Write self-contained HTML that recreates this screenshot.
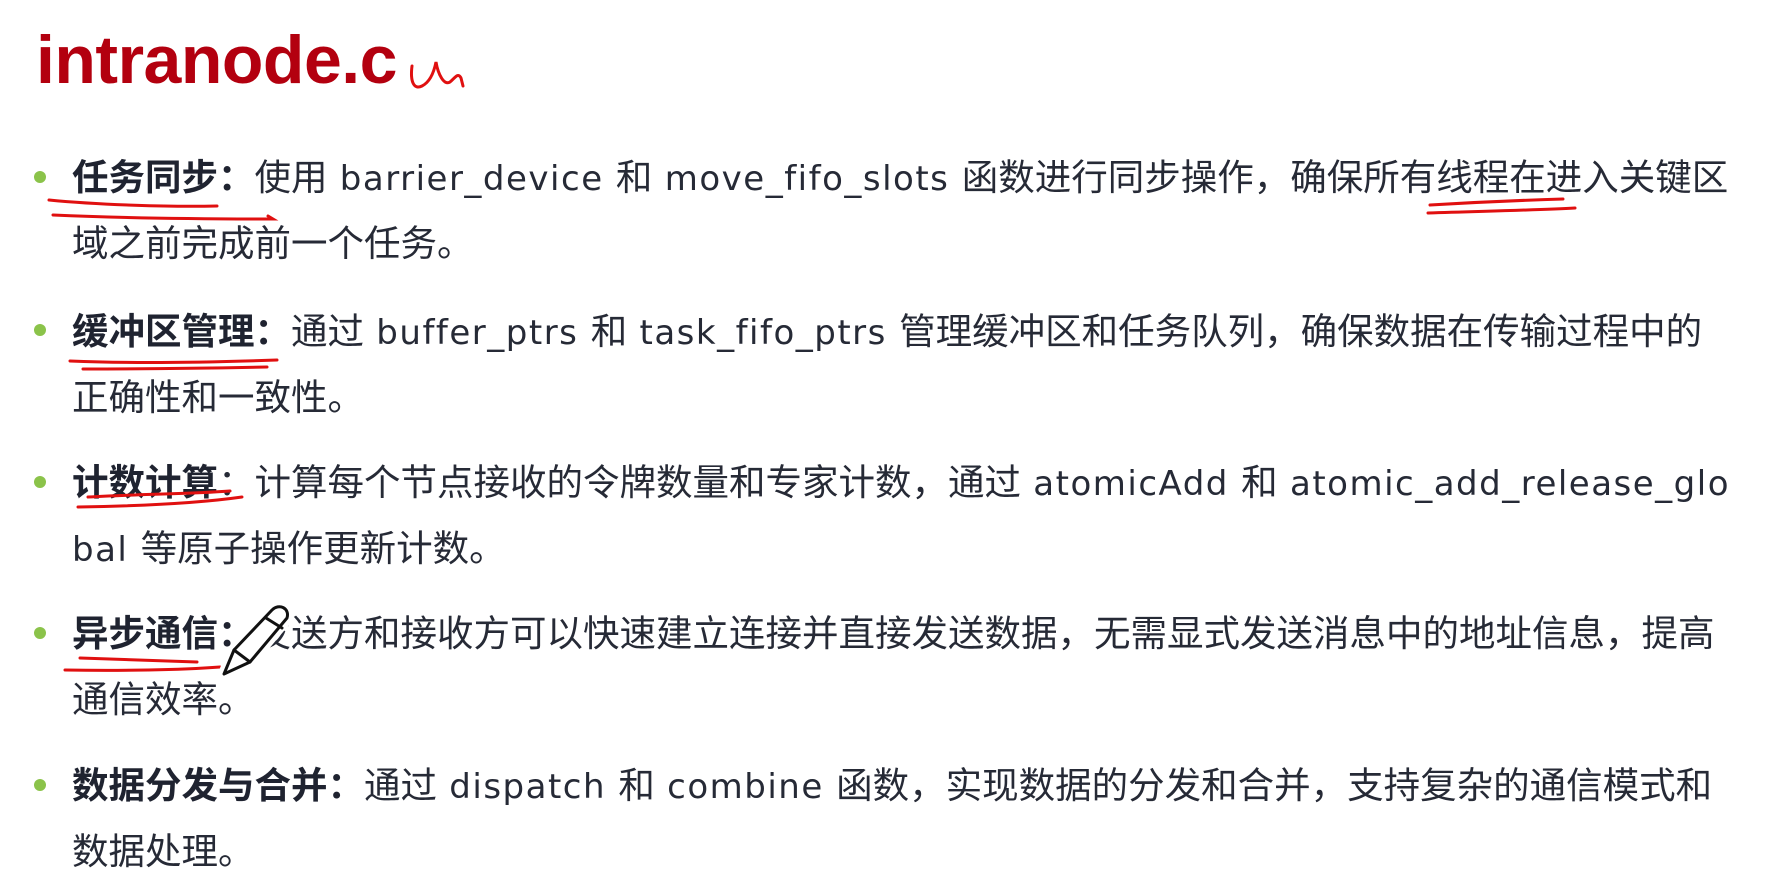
<!DOCTYPE html>
<html><head><meta charset="utf-8">
<style>
html,body{margin:0;padding:0;background:#fff;}
body{width:1770px;height:882px;position:relative;overflow:hidden;font-family:"Liberation Sans","Noto Sans CJK SC",sans-serif;color:#262a36;}
.t{position:absolute;left:36px;top:20px;font-size:68px;font-weight:bold;color:#b3000f;line-height:80px;letter-spacing:-0.5px;}
.l{position:absolute;left:72px;font-size:36.5px;line-height:40px;white-space:nowrap;}
.l b{font-weight:bold;color:#1f2330;}
.e{font-family:"DejaVu Sans",sans-serif;letter-spacing:1.5px;font-size:34px;}
.d{position:absolute;left:34px;width:12px;height:12px;border-radius:50%;background:#8bc34a;}
svg{position:absolute;left:0;top:0;}
</style></head><body>
<div class="t">intranode.c</div>

<div class="d" style="top:171px"></div>
<div class="l" style="top:158px"><b>任务同步：</b>使用<span class="e"> barrier_device </span>和<span class="e"> move_fifo_slots </span>函数进行同步操作，确保所有线程在进入关键区</div>
<div class="l" style="top:224px">域之前完成前一个任务。</div>

<div class="d" style="top:324px"></div>
<div class="l" style="top:312px"><b>缓冲区管理：</b>通过<span class="e"> buffer_ptrs </span>和<span class="e"> task_fifo_ptrs </span>管理缓冲区和任务队列，确保数据在传输过程中的</div>
<div class="l" style="top:378px">正确性和一致性。</div>

<div class="d" style="top:476px"></div>
<div class="l" style="top:463px"><b>计数计算</b>：计算每个节点接收的令牌数量和专家计数，通过<span class="e"> atomicAdd </span>和<span class="e"> atomic_add_release_glo</span></div>
<div class="l" style="top:529px"><span class="e">bal </span>等原子操作更新计数。</div>

<div class="d" style="top:627px"></div>
<div class="l" style="top:614px"><b>异步通信：</b>发送方和接收方可以快速建立连接并直接发送数据，无需显式发送消息中的地址信息，提高</div>
<div class="l" style="top:680px">通信效率。</div>

<div class="d" style="top:779px"></div>
<div class="l" style="top:766px"><b>数据分发与合并：</b>通过<span class="e"> dispatch </span>和<span class="e"> combine </span>函数，实现数据的分发和合并，支持复杂的通信模式和</div>
<div class="l" style="top:832px">数据处理。</div>

<svg width="1770" height="882" fill="none" stroke="#e01010" stroke-linecap="round" stroke-width="3">
<path d="M412 66 C410 82 414 90 422 86 C430 82 434 72 436 62 C438 74 444 86 450 82 C455 78 458 72 461 78 L463 86"/>
<path d="M49 200 C100 205 170 207 217 206"/>
<path d="M53 215 C120 218 200 219 273 219 L268 216"/>
<path d="M1430 205 C1480 202 1530 200 1563 199"/>
<path d="M1428 213 C1490 211 1540 210 1575 208"/>
<path d="M70 361 C140 364 220 362 277 360"/>
<path d="M83 369 C150 369 220 368 267 367"/>
<path d="M88 497 C140 494 190 494 230 491"/>
<path d="M78 507 C140 506 200 503 242 497"/>
<path d="M80 658 C130 660 170 661 197 662"/>
<path d="M65 670 C120 671 180 670 220 667"/>
<g stroke="#111" stroke-width="3" fill="#fff" stroke-linejoin="round">
<path d="M224 674 L234 650 L272 610 C279 603 290 608 287 618 L250 662 Z" stroke="#fff" stroke-width="12"/>
<path d="M224 674 L234 650 L272 610 C279 603 290 608 287 618 L250 662 Z"/>
<path d="M234 650 L250 662"/>
<path d="M266 618 L282 628"/>
</g>
</svg>
</body></html>
